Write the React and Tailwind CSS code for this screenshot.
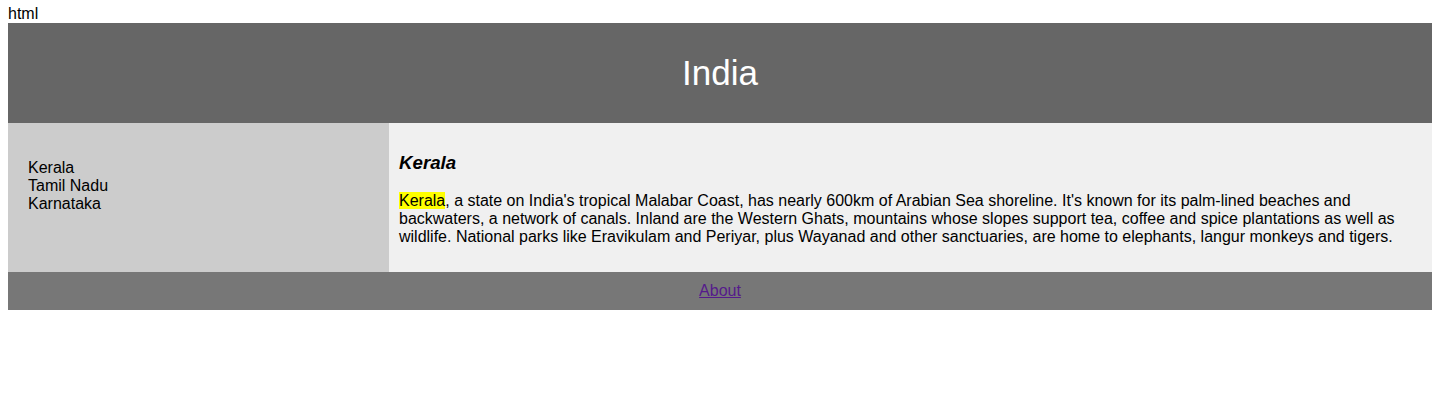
export default function App() {
  return (
    <div className="min-h-[413px] bg-white px-2 pt-[5px] font-['Liberation_Sans',Arial,sans-serif] text-[16px] leading-[18px] text-black">
      <div>html</div>

      <header className="bg-[#666666] py-[30px] text-center text-[35px] leading-[40px] text-white">
        India
      </header>

      <section className="flex">
        <nav className="w-[381px] shrink-0 bg-[#cccccc] p-5">
          <ul className="my-4 list-none p-0">
            <li>Kerala</li>
            <li>Tamil Nadu</li>
            <li>Karnataka</li>
          </ul>
        </nav>

        <article className="flex-1 bg-[#f0f0f0] p-[10px]">
          <h3 className="my-[18.72px] text-[18.72px] font-bold italic leading-[21.5px]">Kerala</h3>
          <p className="mb-4">
            <mark className="bg-[#ffff00] text-black">Kerala</mark>, a state on India's tropical Malabar Coast, has
            nearly 600km of Arabian Sea shoreline. It's known for its palm-lined beaches and backwaters, a network of
            canals. Inland are the Western Ghats, mountains whose slopes support tea, coffee and spice plantations as
            well as wildlife. National parks like Eravikulam and Periyar, plus Wayanad and other sanctuaries, are home
            to elephants, langur monkeys and tigers.
          </p>
        </article>
      </section>

      <footer className="bg-[#777777] p-[10px] text-center text-white">
        <a href="#" className="text-[#551a8b] underline">
          About
        </a>
      </footer>
    </div>
  );
}
